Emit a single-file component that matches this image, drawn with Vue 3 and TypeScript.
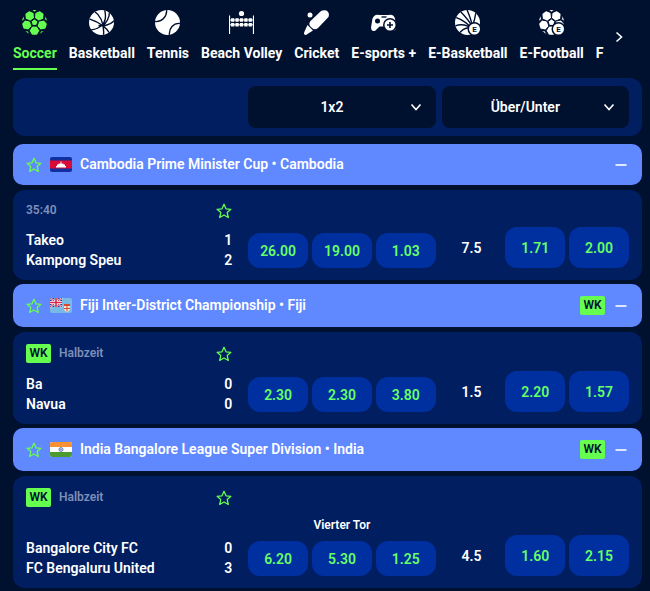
<script setup lang="ts">
import { ref } from 'vue'

interface Sport {
  id: string
  label: string
  icon?: string
}

interface Match {
  clock: string
  weekly: boolean
  home: string
  away: string
  score: [number, number]
  note?: string
  result: string[]
  line: string
  totals: string[]
}

interface League {
  title: string
  flag: 'kh' | 'fj' | 'in'
  weekly: boolean
  match: Match
}

const sports: Sport[] = [
  { id: 'soccer', label: 'Soccer', icon: 'soccer' },
  { id: 'basketball', label: 'Basketball', icon: 'basketball' },
  { id: 'tennis', label: 'Tennis', icon: 'tennis' },
  { id: 'volley', label: 'Beach Volley', icon: 'volley' },
  { id: 'cricket', label: 'Cricket', icon: 'cricket' },
  { id: 'esports', label: 'E-sports +', icon: 'gamepad' },
  { id: 'ebasketball', label: 'E-Basketball', icon: 'ebasketball' },
  { id: 'efootball', label: 'E-Football', icon: 'esoccer' },
  { id: 'f', label: 'F' },
]

const leagues: League[] = [
  {
    title: 'Cambodia Prime Minister Cup • Cambodia',
    flag: 'kh',
    weekly: false,
    match: {
      clock: '35:40', weekly: false, home: 'Takeo', away: 'Kampong Speu', score: [1, 2],
      result: ['26.00', '19.00', '1.03'], line: '7.5', totals: ['1.71', '2.00'],
    },
  },
  {
    title: 'Fiji Inter-District Championship • Fiji',
    flag: 'fj',
    weekly: true,
    match: {
      clock: 'Halbzeit', weekly: true, home: 'Ba', away: 'Navua', score: [0, 0],
      result: ['2.30', '2.30', '3.80'], line: '1.5', totals: ['2.20', '1.57'],
    },
  },
  {
    title: 'India Bangalore League Super Division • India',
    flag: 'in',
    weekly: true,
    match: {
      clock: 'Halbzeit', weekly: true, home: 'Bangalore City FC', away: 'FC Bengaluru United', score: [0, 3],
      note: 'Vierter Tor', result: ['6.20', '5.30', '1.25'], line: '4.5', totals: ['1.60', '2.15'],
    },
  },
]

const active = ref('soccer')
const marketA = ref('1x2')
const marketB = ref('Über/Unter')
const collapsed = ref<string[]>([])

function toggle(title: string): void {
  collapsed.value = collapsed.value.includes(title)
    ? collapsed.value.filter((t) => t !== title)
    : [...collapsed.value, title]
}

/* Regular polygon as an SVG points list, first vertex at `start` degrees. */
function polygon(cx: number, cy: number, r: number, sides: number, start: number): string {
  return Array.from({ length: sides }, (_, i) => {
    const a = ((start + (360 / sides) * i) * Math.PI) / 180
    return `${(cx + r * Math.cos(a)).toFixed(2)},${(cy + r * Math.sin(a)).toFixed(2)}`
  }).join(' ')
}

function ring(distance: number, r: number, sides: number, offset: number, turn: number): string[] {
  return [0, 1, 2, 3, 4].map((i) => {
    const deg = offset + i * 72
    const a = (deg * Math.PI) / 180
    return polygon(distance * Math.cos(a), distance * Math.sin(a), r, sides, deg + turn)
  })
}

const ballPanels: string[] = [
  polygon(0, 0, 3.6, 5, -90),
  ...ring(13.4, 3, 5, -90, 180),
  ...ring(8.2, 5.3, 6, 90, 30),
]
const starPath = 'M8 1.3l2 4.5 4.9.5-3.700 3.300 1.100 4.900L8 12l-4.300 2.500 1.100-4.900L1.100 6.300 6 5.800z'
</script>

<template>
  <main class="page">
    <header class="top">
      <nav class="tabs" aria-label="Sport">
        <a
          v-for="s in sports"
          :key="s.id"
          href="#"
          class="tab"
          :class="{ on: active === s.id }"
          @click.prevent="active = s.id"
        >
          <svg v-if="s.icon" class="sport" viewBox="-12.5 -12.5 25 25" aria-hidden="true">
            <defs>
              <clipPath :id="'disc-' + s.id"><circle r="12.5" /></clipPath>
            </defs>
            <g v-if="s.icon === 'soccer' || s.icon === 'esoccer'" :clip-path="`url(#disc-${s.id})`">
              <polygon v-for="(p, i) in ballPanels" :key="i" :points="p" class="panel" />
            </g>
            <template v-else-if="s.icon === 'basketball'">
              <circle r="12.5" />
              <g class="seam" :clip-path="`url(#disc-${s.id})`">
                <path d="M-13-4C-4-1 5 4 9 12M-8-12C-1-7 3 2 2 13M3-13C5-6 4 1-1 4S-9 8-13 7M13-2C8 3 1 4-3 3M8-11C8-5 5 1 1 3" />
              </g>
            </template>
            <template v-else-if="s.icon === 'tennis'">
              <circle r="12.5" />
              <g class="seam" :clip-path="`url(#disc-${s.id})`">
                <path d="M-13-1C-6 0 0-6-1-13M13 1C6 0 1 6 2 13" />
              </g>
            </template>
            <g v-else-if="s.icon === 'volley'">
              <circle cx="0" cy="-9" r="2.600" />
              <path class="net-post" d="M-12-7V11.500M12-7V11.500" />
              <path class="net-cord" d="M-12-2.500H12M-12 2.300H12" />
              <path class="net-mesh" d="M-10.400-2.500H10.600M-10.400 2.300H10.600" />
            </g>
            <g v-else-if="s.icon === 'cricket'">
              <circle cx="-6.500" cy="-7.500" r="2.500" />
              <path d="M4-11Q6.500-13 10-12Q13.500-10 12-5.500L1.500 5.500Q-1.500 8-4.500 5.500L-6.500 3.500Q-8 1-6-1.500z" />
              <path d="M-9 2.500L-3.500 8-9 11.500Q-11 13-12 12T-12 9z" />
            </g>
            <g v-else-if="s.icon === 'gamepad'">
              <path d="M-4-7.500H5Q10-9 11.500-4L12.500 5Q12 9 8 8L4 4H-4L-8 8Q-12 10-12.500 5L-11-4Q-9-9-4-7.500z" />
              <circle class="hole" cx="-6" cy="-1.500" r="2.500" />
              <path class="seam" d="M-2-5.500H3" />
              <circle class="hole" cx="6.500" cy="2.500" r="7" />
              <circle cx="6.500" cy="2.500" r="5.500" />
              <path class="seam plus" d="M6.500-.5V5.500M3.500 2.500H9.500" />
            </g>
            <template v-else-if="s.icon === 'ebasketball'">
              <circle r="12.5" />
              <g class="seam" :clip-path="`url(#disc-${s.id})`">
                <path d="M-14-6C-5-3 1 1 6 8M-9-13C-3-7 3 0 5 5M-1-14C2-7 4-1 5 4M9-13C8-7 7-2 5 4M-14 4C-7 1 0 2 6 8M-9 12C-5 6 0 4 6 6" />
              </g>
            </template>
            <g v-if="s.icon === 'ebasketball' || s.icon === 'esoccer'">
              <circle class="hole" cx="7" cy="6.500" r="7" />
              <circle cx="7" cy="6.500" r="5.500" />
              <text class="e-mark" x="7" y="9.500" text-anchor="middle">E</text>
            </g>
          </svg>
          <span class="tab-label">{{ s.label }}</span>
        </a>
      </nav>
      <button class="next" type="button" aria-label="Weiter">
        <svg viewBox="0 0 12 12" aria-hidden="true"><path d="M3.500 1.500L8.500 6l-5 4.500" /></svg>
      </button>
    </header>

    <section class="filters columns">
      <div></div>
      <label class="picker">
        <select v-model="marketA" aria-label="Markt 1">
          <option>1x2</option>
        </select>
        <svg viewBox="0 0 12 12" aria-hidden="true"><path d="M1.500 3.500L6 8.500l4.500-5" /></svg>
      </label>
      <label class="picker">
        <select v-model="marketB" aria-label="Markt 2">
          <option>Über/Unter</option>
        </select>
        <svg viewBox="0 0 12 12" aria-hidden="true"><path d="M1.500 3.500L6 8.500l4.500-5" /></svg>
      </label>
    </section>

    <section v-for="l in leagues" :key="l.title" class="league">
      <header class="league-head">
        <button class="icon-button" type="button" aria-label="Liga merken">
          <svg class="star" viewBox="0 0 16 16" aria-hidden="true"><path :d="starPath" /></svg>
        </button>
        <svg class="flag" viewBox="0 0 22 15" aria-hidden="true">
          <template v-if="l.flag === 'kh'">
            <path fill="#10309f" d="M0 0h22v15H0z" />
            <path fill="#d90b38" d="M0 3.500h22v8H0z" />
            <path fill="#fff" d="M6 10.500V9h1V7.500h1.500V6.500h1V7l1-.5V5l.5-1 .5 1v1.500l1 .5v-.5h1v1H15V9h1v1.500z" />
          </template>
          <template v-else-if="l.flag === 'fj'">
            <path fill="#78b9e6" d="M0 0h22v15H0z" />
            <path fill="#263f8f" d="M0 0h12v9H0z" />
            <path stroke="#fff" stroke-width="2" d="M0 0l12 9M12 0L0 9" />
            <path stroke="#d8274a" d="M0 0l12 9M12 0L0 9" />
            <path stroke="#fff" stroke-width="3" d="M6 0v9M0 4.500h12" />
            <path stroke="#d8274a" stroke-width="1.600" d="M6 0v9M0 4.500h12" />
            <path fill="#f2e6db" d="M14 6h6v4q0 3-3 4-3-1-3-4z" />
            <path fill="#d9472f" d="M14 6h6v2h-6zM16.500 8h1v5.500h-1zM14 10h6v1h-6z" />
          </template>
          <template v-else>
            <path fill="#fff" d="M0 0h22v15H0z" />
            <path fill="#f79234" d="M0 0h22v5H0z" />
            <path fill="#4d9b2f" d="M0 10h22v5H0z" />
            <circle cx="11" cy="7.500" r="2" fill="#c8cdea" stroke="#4657a8" stroke-width=".7" />
            <circle cx="11" cy="7.500" r=".6" fill="#4657a8" />
          </template>
        </svg>
        <h2>{{ l.title }}</h2>
        <span v-if="l.weekly" class="badge">WK</span>
        <button class="icon-button" type="button" aria-label="Liga einklappen" @click="toggle(l.title)">
          <svg class="minus" viewBox="0 0 16 16" aria-hidden="true"><path d="M2.500 8h11" /></svg>
        </button>
      </header>

      <article v-if="!collapsed.includes(l.title)" class="match columns">
        <div class="info">
          <div class="status">
            <span v-if="l.match.weekly" class="badge">WK</span>
            <span class="clock">{{ l.match.clock }}</span>
            <button class="icon-button" type="button" aria-label="Spiel merken">
              <svg class="star" viewBox="0 0 16 16" aria-hidden="true"><path :d="starPath" /></svg>
            </button>
          </div>
          <div class="teams">
            <div class="team"><span>{{ l.match.home }}</span><span>{{ l.match.score[0] }}</span></div>
            <div class="team"><span>{{ l.match.away }}</span><span>{{ l.match.score[1] }}</span></div>
          </div>
        </div>
        <div class="market">
          <p v-if="l.match.note" class="note">{{ l.match.note }}</p>
          <div class="odds">
            <button v-for="(o, i) in l.match.result" :key="i" type="button" class="odd">{{ o }}</button>
          </div>
        </div>
        <div class="market">
          <div class="odds tall">
            <span class="line">{{ l.match.line }}</span>
            <button v-for="(o, i) in l.match.totals" :key="i" type="button" class="odd">{{ o }}</button>
          </div>
        </div>
      </article>
    </section>
  </main>
</template>

<style>
body {
  background: #00102f;
}
</style>

<style scoped>
.page {
  padding: 0 8px 3px 13px;
  font-family: Roboto, "Liberation Sans", sans-serif;
  font-size: 14px;
  font-weight: 600;
  line-height: 20px;
  color: #fff;
}

button,
select {
  font: inherit;
  color: inherit;
  border: 0;
  padding: 0;
  margin: 0;
  background: none;
  cursor: pointer;
}

svg {
  display: block;
  fill: none;
}

.top {
  display: flex;
  align-items: center;
  height: 78px;
}

.tabs {
  flex: 1;
  min-width: 0;
  display: flex;
  gap: 12px;
  overflow: hidden;
  align-self: flex-start;
  padding-top: 10px;
}

.tab {
  flex: none;
  display: flex;
  flex-direction: column;
  align-items: center;
  justify-content: flex-end;
  gap: 8px;
  color: #fff;
  font-weight: 700;
  text-decoration: none;
}

.tab-label {
  padding-bottom: 5px;
  border-bottom: 2px solid transparent;
}

.tab.on {
  color: #66ff4f;
}

.on .tab-label {
  border-color: #66ff4f;
}

.sport {
  width: 25px;
  height: 25px;
  fill: currentColor;
}

.panel {
  stroke: #00102f;
  stroke-width: 1;
}

.seam {
  fill: none;
  stroke: #00102f;
  stroke-width: 1.4;
}

.plus {
  stroke-width: 1.6;
}

.hole {
  fill: #00102f;
}

.net-post {
  stroke: currentColor;
  stroke-width: 1.2;
}

.net-cord {
  stroke: currentColor;
  stroke-width: 1;
}

.net-mesh {
  stroke: currentColor;
  stroke-width: 3.4;
  stroke-dasharray: 3.2 1.2;
}

.e-mark {
  fill: #00102f;
  font-size: 8px;
  font-weight: 700;
}

.next {
  width: 22px;
  height: 32px;
  margin-right: 12px;
  display: grid;
  place-items: center;
}

.next svg,
.picker svg {
  width: 12px;
  height: 12px;
  stroke: #fff;
  stroke-width: 1.6;
}

.next svg {
  margin-bottom: 4px;
}

.columns {
  display: grid;
  grid-template-columns: minmax(0, 15fr) minmax(0, 13fr) minmax(0, 13fr);
  column-gap: 6px;
  background: #001e60;
  border-radius: 12px;
}

.filters {
  padding: 8px 13px;
  margin-bottom: 8px;
}

.picker {
  display: grid;
  align-items: center;
}

.picker select {
  grid-area: 1 / 1;
  width: 100%;
  height: 42px;
  padding: 0 30px 0 10px;
  appearance: none;
  text-align: center;
  text-align-last: center;
  background: #00102f;
  border-radius: 8px;
}

.picker svg {
  grid-area: 1 / 1;
  justify-self: end;
  margin-right: 14px;
  pointer-events: none;
}

.league {
  margin-bottom: 4px;
}

.league:last-child {
  margin-bottom: 0;
}

.league-head {
  display: flex;
  align-items: center;
  gap: 8px;
  min-height: 17px;
  padding: 12px 13px;
  margin-bottom: 5px;
  background: #6088ff;
  border-radius: 10px;
}

.league-head h2 {
  flex: 1;
  margin: 0;
  font-size: 14px;
  line-height: 17px;
  font-weight: 600;
}

.icon-button {
  flex: none;
  width: 16px;
  height: 16px;
}

.star {
  stroke: #66ff4f;
  stroke-width: 1.3;
  stroke-linejoin: round;
}

.minus {
  stroke: #fff;
  stroke-width: 1.6;
}

.flag {
  flex: none;
  width: 22px;
  height: 15px;
  border-radius: 2px;
}

.badge {
  flex: none;
  width: 25px;
  border-radius: 2px;
  background: #66ff4f;
  color: #00102f;
  font-size: 12px;
  line-height: 19px;
  text-align: center;
}

.match {
  padding: 12px 13px 10px;
}

.info {
  display: flex;
  flex-direction: column;
  justify-content: space-between;
  gap: 11px;
  padding-right: 10px;
}

.status {
  display: flex;
  align-items: center;
  gap: 8px;
}

.clock {
  flex: 1;
  font-size: 12px;
  line-height: 17px;
  color: #7f8fb8;
}

.team {
  display: flex;
  justify-content: space-between;
}

.market {
  display: flex;
  flex-direction: column;
  justify-content: flex-end;
  padding: 29px 0 2px;
}

.note {
  margin: 0 0 8px;
  font-size: 12px;
  line-height: 16px;
  text-align: center;
}

.odds {
  display: grid;
  grid-template-columns: repeat(3, minmax(0, 1fr));
  gap: 4px;
  height: 35px;
  align-items: stretch;
}

.tall {
  height: 41px;
}

.tall:only-child {
  margin-top: -6px;
}

.odd {
  background: #00309f;
  color: #66ff66;
  border-radius: 12px;
}

.line {
  align-self: center;
  text-align: center;
}
</style>
